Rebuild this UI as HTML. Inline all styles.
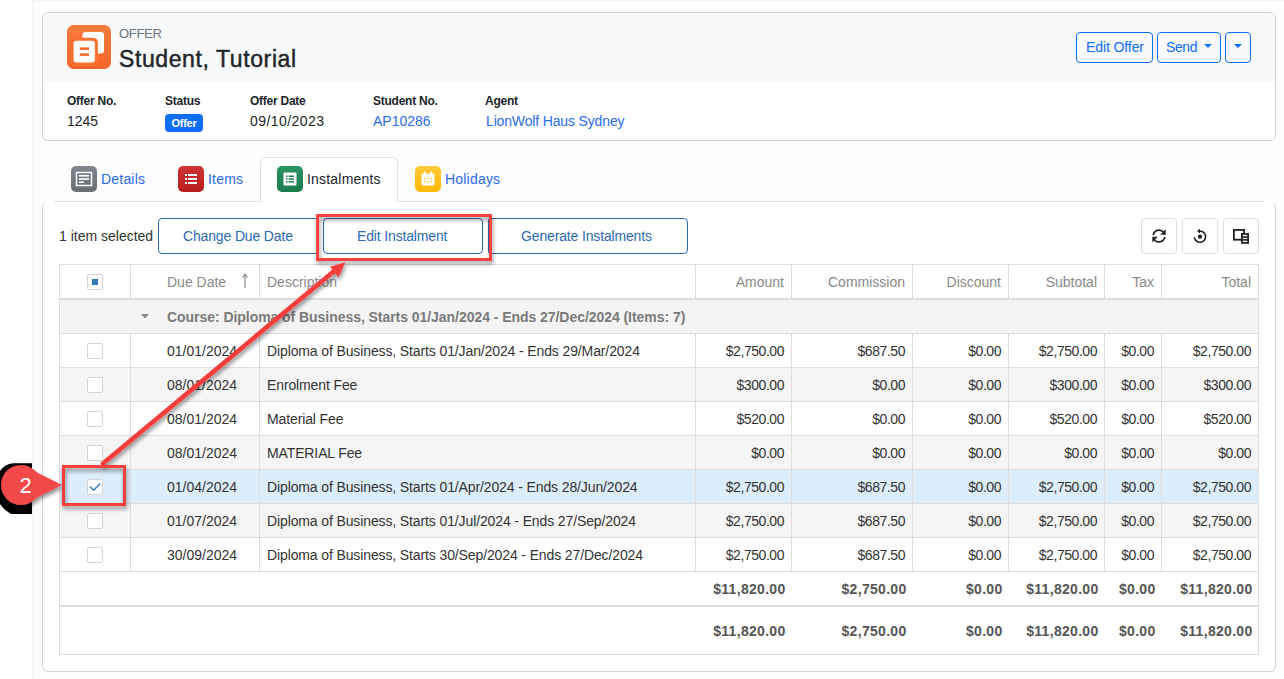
<!DOCTYPE html>
<html><head><meta charset="utf-8">
<style>
*{box-sizing:border-box;margin:0;padding:0}
html,body{width:1284px;height:679px;overflow:hidden;background:#fff;font-family:"Liberation Sans",sans-serif}
body{position:relative}
.abs{position:absolute}
#pagebg{position:absolute;left:32px;top:0;width:1252px;height:679px;background:#fdfdfe;border-left:2px solid #f6f6fc;border-top:1px solid #f3f3fb}
.card{position:absolute;border:1px solid #d4d4d4;border-radius:6px;background:#fff;overflow:hidden}
.lbl{position:absolute;font-weight:bold;font-size:12px;line-height:14px;color:#212529;white-space:nowrap;letter-spacing:-0.25px}
.val{position:absolute;font-size:14px;line-height:16px;color:#212529;white-space:nowrap}
.lnk{color:#2b6cec}
.obtn{position:absolute;top:32px;height:31px;border:1px solid #0d6efd;border-radius:4px;color:#0d6efd;font-size:14px;white-space:nowrap;background:transparent}
.caret{position:absolute;width:0;height:0;border-left:4px solid transparent;border-right:4px solid transparent;border-top:4px solid #0d6efd}
.tab{position:absolute;font-size:14px;line-height:16px;color:#2b6cec;white-space:nowrap;letter-spacing:0.2px}
.ticon{position:absolute;top:166px;width:26px;height:26px;border-radius:5px}
.tb{position:absolute;top:218px;height:36px;border:1px solid #2e6ab0;color:#2e6ab0;font-size:14px;line-height:16px;background:#fff;white-space:nowrap}
.tb span{position:absolute;top:9px;letter-spacing:-0.15px}
.ib{position:absolute;top:218px;width:36px;height:36px;border:1px solid #ddd;border-radius:4px;background:#fff}
.tbl{position:absolute;border:1px solid #ddd;background:#fff}
.hdr{position:absolute;left:60px;width:1198px;background:#fff}
.grp{position:absolute;left:60px;width:1198px;background:#f4f4f4}
.row{position:absolute;left:60px;width:1198px;height:33px}
.vl{position:absolute;width:1px;background:#ddd}
.hl{position:absolute;left:60px;width:1198px;height:1px;background:#ddd}
.hl2{position:absolute;left:60px;width:1198px;height:2px;background:#ddd}
.cb{position:absolute;width:16px;height:16px;border:1px solid #d4d4d4;border-radius:2px;background:#fff}
.th{position:absolute;font-size:14px;line-height:18px;color:#8a8a8a;white-space:nowrap}
.thr{text-align:right}
.gt{position:absolute;font-size:14px;line-height:18px;font-weight:bold;color:#7a7a7a;white-space:nowrap;letter-spacing:-0.05px}
.td{position:absolute;font-size:14px;line-height:18px;color:#333;white-space:nowrap}
.tdn{font-size:14px;letter-spacing:-0.45px}
.tdb{font-weight:bold;color:#555;letter-spacing:0.3px;margin-right:-1.5px}
</style></head><body>
<div id="pagebg"></div>

<!-- header card -->
<div class="card" style="left:42px;top:12px;width:1234px;height:129px">
  <div class="abs" style="left:0;top:0;width:1232px;height:69px;background:#f8f9fa"></div>
</div>
<svg class="abs" style="left:67px;top:25px" width="44" height="44" viewBox="0 0 44 44">
  <defs><linearGradient id="og" x1="0" y1="0" x2="0" y2="1"><stop offset="0" stop-color="#fb7d3e"/><stop offset="1" stop-color="#f86428"/></linearGradient></defs>
  <rect width="44" height="44" rx="6.5" fill="url(#og)"/>
  <rect x="15.5" y="7" width="21.5" height="21.5" rx="3" fill="#fff"/>
  <rect x="3.6" y="12.8" width="27.3" height="27.7" rx="5" fill="#f9712f"/>
  <rect x="6.6" y="15.8" width="21.3" height="21.7" rx="3" fill="#fff"/>
  <rect x="12.8" y="22.4" width="9.2" height="2.6" fill="#f86a2c"/>
  <rect x="12.8" y="28.3" width="9.2" height="2.6" fill="#f86a2c"/>
</svg>
<div class="abs" style="left:119px;top:26px;font-size:13px;line-height:15px;color:#6c757d;letter-spacing:-0.3px">OFFER</div>
<div class="abs" style="left:119px;top:46px;font-size:23px;line-height:27px;color:#212529;letter-spacing:0.6px;-webkit-text-stroke:0.45px #212529;white-space:nowrap">Student, Tutorial</div>

<div class="obtn" style="left:1076px;width:77px"><span class="abs" style="left:9px;top:6px;letter-spacing:-0.1px">Edit Offer</span></div>
<div class="obtn" style="left:1157px;width:64px"><span class="abs" style="left:8px;top:6px;letter-spacing:-0.4px">Send</span><div class="caret" style="left:46px;top:11px"></div></div>
<div class="obtn" style="left:1225px;width:26px"><div class="caret" style="left:8px;top:11px"></div></div>

<div class="lbl" style="left:67px;top:94px">Offer No.</div>
<div class="val" style="left:67px;top:113px">1245</div>
<div class="lbl" style="left:165px;top:94px">Status</div>
<div class="abs" style="left:165px;top:114px;width:38px;height:18px;border-radius:4px;background:#0d6efd;color:#fff;font-size:11px;font-weight:bold;line-height:18px;text-align:center;letter-spacing:-0.3px">Offer</div>
<div class="lbl" style="left:250px;top:94px">Offer Date</div>
<div class="val" style="left:250px;top:113px;letter-spacing:0.45px">09/10/2023</div>
<div class="lbl" style="left:373px;top:94px">Student No.</div>
<div class="val lnk" style="left:373px;top:113px">AP10286</div>
<div class="lbl" style="left:485px;top:94px">Agent</div>
<div class="val lnk" style="left:486px;top:113px;letter-spacing:-0.15px">LionWolf Haus Sydney</div>

<!-- body card -->
<div class="card" style="left:42px;top:201px;width:1234px;height:471px;border-top-color:transparent"></div>
<!-- tab strip line (covers top border to the left region) -->
<div class="abs" style="left:54px;top:201px;width:1210px;height:1px;background:#dee2e6"></div>
<!-- active tab -->
<div class="abs" style="left:260px;top:157px;width:138px;height:45px;border:1px solid #dee2e6;border-bottom:none;border-radius:6px 6px 0 0;background:#fff"></div>

<div class="ticon" style="left:71px;background:linear-gradient(#80878e,#666d74)">
  <svg class="abs" style="left:0;top:0" width="26" height="26"><rect x="5.5" y="6.5" width="15" height="13" fill="none" stroke="#fff" stroke-width="1.5"/><rect x="8" y="9" width="10" height="1.6" fill="#fff"/><rect x="8" y="12.2" width="10" height="1.6" fill="#fff"/><rect x="8" y="15.4" width="5" height="1.6" fill="#fff"/></svg>
</div>
<div class="tab" style="left:101px;top:171px">Details</div>
<div class="ticon" style="left:178px;background:linear-gradient(#d23434,#b71c1c)">
  <svg class="abs" style="left:0;top:0" width="26" height="26"><rect x="7" y="8" width="2" height="2" fill="#fff"/><rect x="7" y="12" width="2" height="2" fill="#fff"/><rect x="7" y="16" width="2" height="2" fill="#fff"/><rect x="10" y="8" width="9" height="2" fill="#fff"/><rect x="10" y="12" width="9" height="2" fill="#fff"/><rect x="10" y="16" width="9" height="2" fill="#fff"/></svg>
</div>
<div class="tab" style="left:208px;top:171px">Items</div>
<div class="ticon" style="left:277px;background:linear-gradient(#2b9462,#1c7a4c)">
  <svg class="abs" style="left:0;top:0" width="26" height="26"><rect x="6.5" y="6.5" width="13" height="13" rx="1" fill="#fff"/><rect x="9" y="9.5" width="1.5" height="1.5" fill="#1f8053"/><rect x="9" y="12.3" width="1.5" height="1.5" fill="#1f8053"/><rect x="9" y="15.1" width="1.5" height="1.5" fill="#1f8053"/><rect x="11.5" y="9.5" width="5.5" height="1.5" fill="#1f8053"/><rect x="11.5" y="12.3" width="5.5" height="1.5" fill="#1f8053"/><rect x="11.5" y="15.1" width="5.5" height="1.5" fill="#1f8053"/></svg>
</div>
<div class="tab" style="left:307px;top:171px;color:#212529">Instalments</div>
<div class="ticon" style="left:415px;background:linear-gradient(#ffc83a,#ffb900)">
  <svg class="abs" style="left:0;top:0" width="26" height="26"><rect x="6.5" y="7.5" width="13" height="12" rx="1.5" fill="#fff"/><rect x="9" y="5.5" width="1.5" height="3" fill="#fff"/><rect x="15.5" y="5.5" width="1.5" height="3" fill="#fff"/><g fill="#ffcf5a"><rect x="9" y="12" width="1.6" height="1.6"/><rect x="12.2" y="12" width="1.6" height="1.6"/><rect x="15.4" y="12" width="1.6" height="1.6"/><rect x="9" y="15" width="1.6" height="1.6"/><rect x="12.2" y="15" width="1.6" height="1.6"/><rect x="15.4" y="15" width="1.6" height="1.6"/></g></svg>
</div>
<div class="tab" style="left:445px;top:171px">Holidays</div>

<!-- toolbar -->
<div class="abs" style="left:59px;top:228px;font-size:14px;line-height:16px;color:#333;white-space:nowrap">1 item selected</div>
<div class="tb" style="left:158px;width:170px;border-radius:4px 0 0 4px"><span style="left:24px">Change Due Date</span></div>
<div class="tb" style="left:488px;width:200px;border-radius:0 4px 4px 0"><span style="left:32px">Generate Instalments</span></div>

<div class="ib" style="left:1141px"></div>
<div class="ib" style="left:1182px"></div>
<div class="ib" style="left:1223px"></div>
<svg class="abs" style="left:1140px;top:220px" width="120" height="32" viewBox="1140 220 120 32">
  <path d="M1153.2 235.2A5.9 5.9 0 0 1 1163.6 232.3" fill="none" stroke="#222" stroke-width="1.65"/>
  <path d="M1165.7 229.3V234.8H1160.2Z" fill="#222"/>
  <path d="M1164.8 236.8A5.9 5.9 0 0 1 1154.4 239.7" fill="none" stroke="#222" stroke-width="1.65"/>
  <path d="M1152.3 236.8V242.4L1157.8 236.8Z" fill="#222"/>
  <path d="M1200 231.1A5.6 5.6 0 1 1 1194.4 237.2" fill="none" stroke="#222" stroke-width="1.6"/>
  <path d="M1197 231.1L1200 228.8V233.4Z" fill="#222"/>
  <circle cx="1200" cy="236.7" r="2.1" fill="#222"/>
  <rect x="1233.9" y="229.9" width="10.2" height="9.8" fill="none" stroke="#222" stroke-width="1.8"/>
  <rect x="1241.9" y="233.9" width="6.2" height="9" fill="#fff" stroke="#222" stroke-width="1.8"/>
  <rect x="1242" y="236.2" width="6" height="1.6" fill="#222"/>
  <rect x="1242" y="239.1" width="6" height="1.6" fill="#222"/>
</svg>

<div class="tbl" style="left:59px;top:264px;width:1200px;height:391px"></div>
<div class="hdr" style="top:265px;height:32px"></div>
<div class="vl" style="left:130px;top:264px;height:34px"></div>
<div class="vl" style="left:259px;top:264px;height:34px"></div>
<div class="vl" style="left:695px;top:264px;height:34px"></div>
<div class="vl" style="left:791px;top:264px;height:34px"></div>
<div class="vl" style="left:912px;top:264px;height:34px"></div>
<div class="vl" style="left:1008px;top:264px;height:34px"></div>
<div class="vl" style="left:1104px;top:264px;height:34px"></div>
<div class="vl" style="left:1161px;top:264px;height:34px"></div>
<div class="hl2" style="top:298px"></div>
<div class="cb" style="left:87px;top:274px"><div style="position:absolute;left:4px;top:4px;width:6px;height:6px;background:#337ab7"></div></div>
<div class="th" style="left:167px;top:273px">Due Date</div>
<svg class="abs" style="left:240px;top:273px" width="10" height="16" viewBox="0 0 10 16"><path d="M5 1.5V15" stroke="#888" stroke-width="1.2"/><path d="M2.5 4.5L5 1.2L7.5 4.5" fill="none" stroke="#888" stroke-width="1.2"/></svg>
<div class="th" style="left:267px;top:273px">Description</div>
<div class="th thr" style="right:500.0px;top:273px">Amount</div>
<div class="th thr" style="right:379.0px;top:273px">Commission</div>
<div class="th thr" style="right:283.0px;top:273px">Discount</div>
<div class="th thr" style="right:187.0px;top:273px">Subtotal</div>
<div class="th thr" style="right:130.0px;top:273px">Tax</div>
<div class="th thr" style="right:33.0px;top:273px">Total</div>
<div class="grp" style="top:300px;height:33px"></div>
<svg class="abs" style="left:141px;top:314px" width="8" height="5"><path d="M0 0H8L4 4.5Z" fill="#888"/></svg>
<div class="gt" style="left:167px;top:308px">Course: Diploma of Business, Starts 01/Jan/2024 - Ends 27/Dec/2024 (Items: 7)</div>
<div class="hl" style="top:333px"></div>
<div class="row" style="top:334px;background:#fff"></div>
<div class="hl" style="top:367px"></div>
<div class="vl" style="left:130px;top:334px;height:33px"></div>
<div class="vl" style="left:259px;top:334px;height:33px"></div>
<div class="vl" style="left:695px;top:334px;height:33px"></div>
<div class="vl" style="left:791px;top:334px;height:33px"></div>
<div class="vl" style="left:912px;top:334px;height:33px"></div>
<div class="vl" style="left:1008px;top:334px;height:33px"></div>
<div class="vl" style="left:1104px;top:334px;height:33px"></div>
<div class="vl" style="left:1161px;top:334px;height:33px"></div>
<div class="cb" style="left:87px;top:343px"></div>
<div class="td" style="left:167px;top:342px">01/01/2024</div>
<div class="td" style="left:267px;top:342px;letter-spacing:-0.12px">Diploma of Business, Starts 01/Jan/2024 - Ends 29/Mar/2024</div>
<div class="td tdn" style="right:500.0px;top:342px">$2,750.00</div>
<div class="td tdn" style="right:379.0px;top:342px">$687.50</div>
<div class="td tdn" style="right:283.0px;top:342px">$0.00</div>
<div class="td tdn" style="right:187.0px;top:342px">$2,750.00</div>
<div class="td tdn" style="right:130.0px;top:342px">$0.00</div>
<div class="td tdn" style="right:33.0px;top:342px">$2,750.00</div>
<div class="row" style="top:368px;background:#f5f5f5"></div>
<div class="hl" style="top:401px"></div>
<div class="vl" style="left:130px;top:368px;height:33px"></div>
<div class="vl" style="left:259px;top:368px;height:33px"></div>
<div class="vl" style="left:695px;top:368px;height:33px"></div>
<div class="vl" style="left:791px;top:368px;height:33px"></div>
<div class="vl" style="left:912px;top:368px;height:33px"></div>
<div class="vl" style="left:1008px;top:368px;height:33px"></div>
<div class="vl" style="left:1104px;top:368px;height:33px"></div>
<div class="vl" style="left:1161px;top:368px;height:33px"></div>
<div class="cb" style="left:87px;top:377px"></div>
<div class="td" style="left:167px;top:376px">08/01/2024</div>
<div class="td" style="left:267px;top:376px;letter-spacing:-0.12px">Enrolment Fee</div>
<div class="td tdn" style="right:500.0px;top:376px">$300.00</div>
<div class="td tdn" style="right:379.0px;top:376px">$0.00</div>
<div class="td tdn" style="right:283.0px;top:376px">$0.00</div>
<div class="td tdn" style="right:187.0px;top:376px">$300.00</div>
<div class="td tdn" style="right:130.0px;top:376px">$0.00</div>
<div class="td tdn" style="right:33.0px;top:376px">$300.00</div>
<div class="row" style="top:402px;background:#fff"></div>
<div class="hl" style="top:435px"></div>
<div class="vl" style="left:130px;top:402px;height:33px"></div>
<div class="vl" style="left:259px;top:402px;height:33px"></div>
<div class="vl" style="left:695px;top:402px;height:33px"></div>
<div class="vl" style="left:791px;top:402px;height:33px"></div>
<div class="vl" style="left:912px;top:402px;height:33px"></div>
<div class="vl" style="left:1008px;top:402px;height:33px"></div>
<div class="vl" style="left:1104px;top:402px;height:33px"></div>
<div class="vl" style="left:1161px;top:402px;height:33px"></div>
<div class="cb" style="left:87px;top:411px"></div>
<div class="td" style="left:167px;top:410px">08/01/2024</div>
<div class="td" style="left:267px;top:410px;letter-spacing:-0.12px">Material Fee</div>
<div class="td tdn" style="right:500.0px;top:410px">$520.00</div>
<div class="td tdn" style="right:379.0px;top:410px">$0.00</div>
<div class="td tdn" style="right:283.0px;top:410px">$0.00</div>
<div class="td tdn" style="right:187.0px;top:410px">$520.00</div>
<div class="td tdn" style="right:130.0px;top:410px">$0.00</div>
<div class="td tdn" style="right:33.0px;top:410px">$520.00</div>
<div class="row" style="top:436px;background:#f5f5f5"></div>
<div class="hl" style="top:469px"></div>
<div class="vl" style="left:130px;top:436px;height:33px"></div>
<div class="vl" style="left:259px;top:436px;height:33px"></div>
<div class="vl" style="left:695px;top:436px;height:33px"></div>
<div class="vl" style="left:791px;top:436px;height:33px"></div>
<div class="vl" style="left:912px;top:436px;height:33px"></div>
<div class="vl" style="left:1008px;top:436px;height:33px"></div>
<div class="vl" style="left:1104px;top:436px;height:33px"></div>
<div class="vl" style="left:1161px;top:436px;height:33px"></div>
<div class="cb" style="left:87px;top:445px"></div>
<div class="td" style="left:167px;top:444px">08/01/2024</div>
<div class="td" style="left:267px;top:444px;letter-spacing:-0.12px">MATERIAL Fee</div>
<div class="td tdn" style="right:500.0px;top:444px">$0.00</div>
<div class="td tdn" style="right:379.0px;top:444px">$0.00</div>
<div class="td tdn" style="right:283.0px;top:444px">$0.00</div>
<div class="td tdn" style="right:187.0px;top:444px">$0.00</div>
<div class="td tdn" style="right:130.0px;top:444px">$0.00</div>
<div class="td tdn" style="right:33.0px;top:444px">$0.00</div>
<div class="row" style="top:470px;background:#dcedfb"></div>
<div class="hl" style="top:503px"></div>
<div class="vl" style="left:130px;top:470px;height:33px"></div>
<div class="vl" style="left:259px;top:470px;height:33px"></div>
<div class="vl" style="left:695px;top:470px;height:33px"></div>
<div class="vl" style="left:791px;top:470px;height:33px"></div>
<div class="vl" style="left:912px;top:470px;height:33px"></div>
<div class="vl" style="left:1008px;top:470px;height:33px"></div>
<div class="vl" style="left:1104px;top:470px;height:33px"></div>
<div class="vl" style="left:1161px;top:470px;height:33px"></div>
<div class="cb" style="left:87px;top:479px"><svg class="abs" style="left:-1px;top:-1px" width="16" height="16"><path d="M2.8 7.5L6.7 11.2L13.2 4.4" fill="none" stroke="#337ab7" stroke-width="1.4"/></svg></div>
<div class="td" style="left:167px;top:478px">01/04/2024</div>
<div class="td" style="left:267px;top:478px;letter-spacing:-0.12px">Diploma of Business, Starts 01/Apr/2024 - Ends 28/Jun/2024</div>
<div class="td tdn" style="right:500.0px;top:478px">$2,750.00</div>
<div class="td tdn" style="right:379.0px;top:478px">$687.50</div>
<div class="td tdn" style="right:283.0px;top:478px">$0.00</div>
<div class="td tdn" style="right:187.0px;top:478px">$2,750.00</div>
<div class="td tdn" style="right:130.0px;top:478px">$0.00</div>
<div class="td tdn" style="right:33.0px;top:478px">$2,750.00</div>
<div class="row" style="top:504px;background:#f5f5f5"></div>
<div class="hl" style="top:537px"></div>
<div class="vl" style="left:130px;top:504px;height:33px"></div>
<div class="vl" style="left:259px;top:504px;height:33px"></div>
<div class="vl" style="left:695px;top:504px;height:33px"></div>
<div class="vl" style="left:791px;top:504px;height:33px"></div>
<div class="vl" style="left:912px;top:504px;height:33px"></div>
<div class="vl" style="left:1008px;top:504px;height:33px"></div>
<div class="vl" style="left:1104px;top:504px;height:33px"></div>
<div class="vl" style="left:1161px;top:504px;height:33px"></div>
<div class="cb" style="left:87px;top:513px"></div>
<div class="td" style="left:167px;top:512px">01/07/2024</div>
<div class="td" style="left:267px;top:512px;letter-spacing:-0.12px">Diploma of Business, Starts 01/Jul/2024 - Ends 27/Sep/2024</div>
<div class="td tdn" style="right:500.0px;top:512px">$2,750.00</div>
<div class="td tdn" style="right:379.0px;top:512px">$687.50</div>
<div class="td tdn" style="right:283.0px;top:512px">$0.00</div>
<div class="td tdn" style="right:187.0px;top:512px">$2,750.00</div>
<div class="td tdn" style="right:130.0px;top:512px">$0.00</div>
<div class="td tdn" style="right:33.0px;top:512px">$2,750.00</div>
<div class="row" style="top:538px;background:#fff"></div>
<div class="hl" style="top:571px"></div>
<div class="vl" style="left:130px;top:538px;height:33px"></div>
<div class="vl" style="left:259px;top:538px;height:33px"></div>
<div class="vl" style="left:695px;top:538px;height:33px"></div>
<div class="vl" style="left:791px;top:538px;height:33px"></div>
<div class="vl" style="left:912px;top:538px;height:33px"></div>
<div class="vl" style="left:1008px;top:538px;height:33px"></div>
<div class="vl" style="left:1104px;top:538px;height:33px"></div>
<div class="vl" style="left:1161px;top:538px;height:33px"></div>
<div class="cb" style="left:87px;top:547px"></div>
<div class="td" style="left:167px;top:546px">30/09/2024</div>
<div class="td" style="left:267px;top:546px;letter-spacing:-0.12px">Diploma of Business, Starts 30/Sep/2024 - Ends 27/Dec/2024</div>
<div class="td tdn" style="right:500.0px;top:546px">$2,750.00</div>
<div class="td tdn" style="right:379.0px;top:546px">$687.50</div>
<div class="td tdn" style="right:283.0px;top:546px">$0.00</div>
<div class="td tdn" style="right:187.0px;top:546px">$2,750.00</div>
<div class="td tdn" style="right:130.0px;top:546px">$0.00</div>
<div class="td tdn" style="right:33.0px;top:546px">$2,750.00</div>
<div class="hl2" style="top:605px"></div>
<div class="td tdb" style="right:500.0px;top:580px">$11,820.00</div>
<div class="td tdb" style="right:500.0px;top:622px">$11,820.00</div>
<div class="td tdb" style="right:379.0px;top:580px">$2,750.00</div>
<div class="td tdb" style="right:379.0px;top:622px">$2,750.00</div>
<div class="td tdb" style="right:283.0px;top:580px">$0.00</div>
<div class="td tdb" style="right:283.0px;top:622px">$0.00</div>
<div class="td tdb" style="right:187.0px;top:580px">$11,820.00</div>
<div class="td tdb" style="right:187.0px;top:622px">$11,820.00</div>
<div class="td tdb" style="right:130.0px;top:580px">$0.00</div>
<div class="td tdb" style="right:130.0px;top:622px">$0.00</div>
<div class="td tdb" style="right:33.0px;top:580px">$11,820.00</div>
<div class="td tdb" style="right:33.0px;top:622px">$11,820.00</div>

<!-- edit instalment button above annotation area -->
<div class="abs" style="left:319px;top:217px;width:170px;height:41px;background:#fff"></div>
<div class="abs" style="left:488px;top:218px;width:3px;height:36px;border:1px solid #2e6ab0;border-right:none;border-radius:3px 0 0 3px"></div>
<div class="tb" style="left:323px;width:160px;height:36px;border-radius:4px"><span style="left:33px">Edit Instalment</span></div>
<!-- annotations -->
<svg class="abs" style="left:0;top:0" width="1284" height="679" viewBox="0 0 1284 679">
  <defs>
    <filter id="sh" x="-20%" y="-20%" width="140%" height="140%"><feGaussianBlur in="SourceAlpha" stdDeviation="2"/><feOffset dx="1" dy="3"/><feComponentTransfer><feFuncA type="linear" slope="0.45"/></feComponentTransfer><feMerge><feMergeNode/><feMergeNode in="SourceGraphic"/></feMerge></filter>
  </defs>
  <g filter="url(#sh)">
    <rect x="317.6" y="215.5" width="172.9" height="44" fill="none" stroke="#fa3c3c" stroke-width="2.9"/>
    <rect x="63.5" y="466.5" width="61" height="38" fill="none" stroke="#f83e3e" stroke-width="3"/>
    <path d="M103 463.5L336 269.5" stroke="#f83e3e" stroke-width="4.6" stroke-linecap="round"/>
    <path d="M345.5 262.3L330 266.8L338.5 277.3Z" fill="#f83e3e"/>
  </g>
  <path d="M0 471Q5 464 13 463.3H32V514H11Q4 510 0 504Z" fill="#000"/>
  <g filter="url(#sh)">
    <path d="M21 465a20 20 0 1 0 0 40c7 0 12-3.5 16-7.5l25-12.5l-25-12.5c-4-4-9-7.5-16-7.5z" fill="#f44848"/>
  </g>
  <text x="25.5" y="493" font-family="Liberation Sans" font-size="22" fill="#fff" text-anchor="middle">2</text>
</svg>
</body></html>
